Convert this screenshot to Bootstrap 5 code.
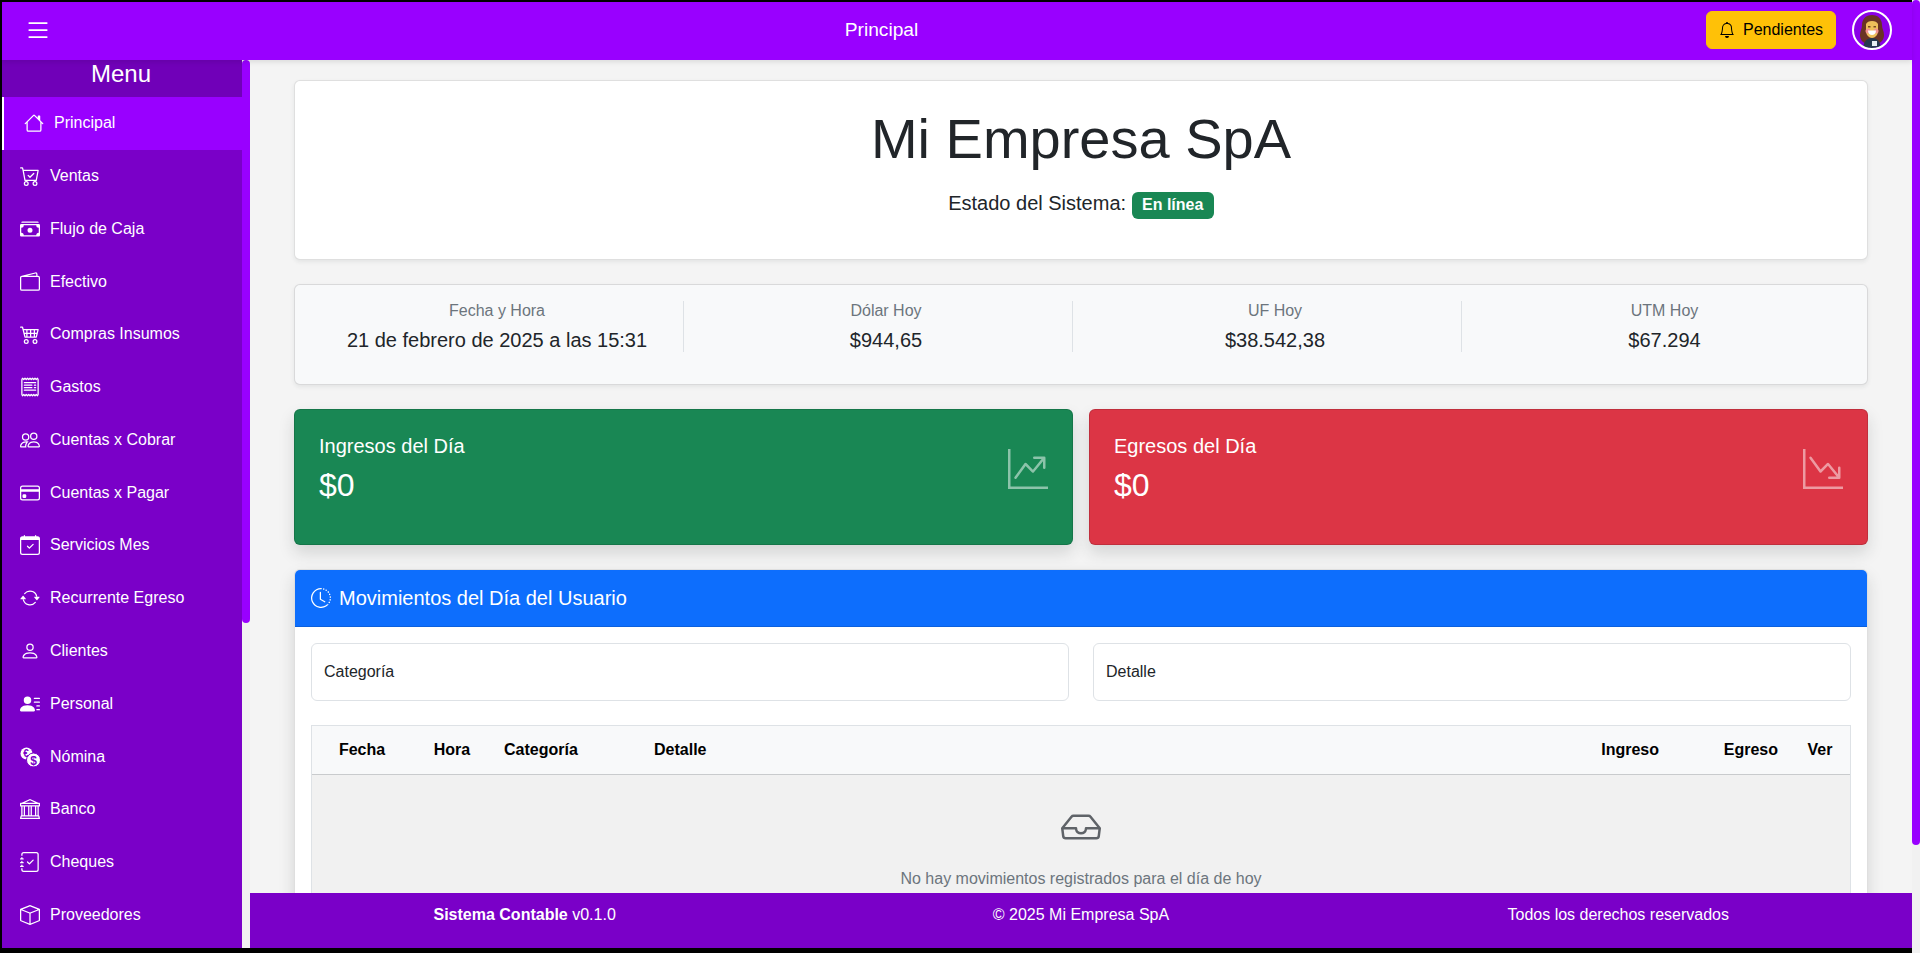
<!DOCTYPE html>
<html lang="es">
<head>
<meta charset="utf-8">
<title>Principal</title>
<link rel="stylesheet" href="https://cdn.jsdelivr.net/npm/bootstrap@5.3.0/dist/css/bootstrap.min.css">
<style>
html,body{height:100%;overflow:hidden}
body{background:#000;font-family:"Liberation Sans",Arial,sans-serif;color:#212529}
.app-shell{margin:2px 0 5px 2px;min-width:0}
.rail{width:8px;flex:none;background:#f1f1f1}
.rail-thumb{background:#9900ff;border-radius:4px}
.rail-page{height:845px}
.rail-side{height:563px}
.top-bar{height:58px;flex:none;background:#9900ff;color:#fff;padding:0 20px 2px 0;position:relative;z-index:2;box-shadow:0 2px 5px rgba(0,0,0,.1)}
.menu-toggle{padding:0 5px 0 22px;line-height:0;background:none;border:0}
.ico{display:inline-block;fill:currentColor;flex:none;vertical-align:-.125em}
.top-title{font-size:19.2px}
.pending-btn{font-size:16px;width:130px;height:38px;white-space:nowrap}
.pending-btn .ico{margin-right:8px}
.main-row{min-height:0}
.side-panel{width:240px;flex:none;background:#7a00c8;overflow:hidden}
.menu-head{background:#7000b8;color:#fff;font-size:24px;line-height:28.8px;padding:0 2px 8px 0;text-align:center;height:36.8px}
.menu-link{display:flex;align-items:center;color:#fff;text-decoration:none;font-size:16px;line-height:24px;padding:14.4px 0 14.4px 18px;white-space:nowrap}
.menu-link .ico{margin-right:10px}
.menu-link.is-current{background:#9900ff;border-left:2px solid #fff;padding-left:20px}
.content-pane{background:#f4f4f4;padding:20px 44px;min-height:0}
.stat-cell{height:51px}
.stat-title{color:#6c757d;line-height:20px;margin-bottom:7px}
.online-chip{font-size:.8em;background:#198754;border-radius:6px;vertical-align:baseline}
.lead-line{font-size:20px;font-weight:400;line-height:30px}
.hero-title{font-size:56px;font-weight:400;line-height:1.2}
.flow-ico{opacity:.5}
.filter-input{height:58px;font-size:16px}
.filter-input::placeholder{color:#212529;opacity:1}
.mov-table-wrap{border:1px solid #dee2e6;border-bottom:0}
.mov-table{table-layout:fixed;margin:0}
.mov-table th{background:#f8f9fa;color:#000;font-size:16px;padding:12px;border-bottom:1px solid #c9cbcd;white-space:nowrap}
.mov-table td.empty-cell{background:#f1f1f1;color:#6c757d;padding:32px 12px 16px;border:0}
.c-fecha{width:100px}.c-hora{width:80px}.c-cat{width:150px}.c-ing{width:119px}.c-eg{width:119px}.c-ver{width:60px}
.empty-ico{color:#5f6368;display:block;margin:0 auto 20px}
.bottom-bar{background:#7a00c8;color:#fff;height:55px;padding-top:10px;flex:none;font-size:16px;line-height:24px}
.foot-l{padding-left:183.5px}
.foot-r{padding-right:183px}
.card{--bs-card-border-color:rgba(0,0,0,.125)}
</style>
</head>
<body class="d-flex">
<div class="app-shell d-flex flex-column flex-grow-1">
  <header class="top-bar d-flex align-items-center">
    <button class="menu-toggle text-white" type="button" aria-label="Menu">
      <svg class="ico" width="28" height="28" viewBox="0 0 16 16"><path d="M2.5 12a.5.5 0 0 1 .5-.5h10a.5.5 0 0 1 0 1H3a.5.5 0 0 1-.5-.5zm0-4a.5.5 0 0 1 .5-.5h10a.5.5 0 0 1 0 1H3a.5.5 0 0 1-.5-.5zm0-4a.5.5 0 0 1 .5-.5h10a.5.5 0 0 1 0 1H3a.5.5 0 0 1-.5-.5z"/></svg>
    </button>
    <div class="flex-grow-1 text-center top-title">Principal</div>
    <button class="btn btn-warning pending-btn d-flex align-items-center me-3" type="button">
      <svg class="ico" width="16" height="16" viewBox="0 0 16 16"><path d="M8 16a2 2 0 0 0 2-2H6a2 2 0 0 0 2 2zM8 1.918l-.797.161A4.002 4.002 0 0 0 4 6c0 .628-.134 2.197-.459 3.742-.16.767-.376 1.566-.663 2.258h10.244c-.287-.692-.502-1.49-.663-2.258C12.134 8.197 12 6.628 12 6a4.002 4.002 0 0 0-3.203-3.92L8 1.917zM14.22 12c.223.447.481.801.78 1H1c.299-.199.557-.553.78-1C2.68 10.2 3 6.88 3 6c0-2.42 1.72-4.44 4.005-4.901a1 1 0 1 1 1.99 0A5.002 5.002 0 0 1 13 6c0 .88.32 4.2 1.22 6z"/></svg>Pendientes
    </button>
    <svg width="40" height="40" viewBox="0 0 40 40" role="img" aria-label="Usuario">
      <defs><clipPath id="avClip"><circle cx="20" cy="20" r="18"/></clipPath></defs>
      <g clip-path="url(#avClip)">
        <rect width="40" height="40" fill="#8a00e6"/>
        <path d="M20 5c-6 0-10 4-10 10 0 4-2 6-2 10 0 4 2 7 5 8h14c3-1 5-4 5-8 0-4-2-6-2-10 0-6-4-10-10-10z" fill="#6a3324"/>
        <path d="M11 40c0-7 3-12 9-12s9 5 9 12z" fill="#26384e"/>
        <rect x="20" y="31" width="5" height="5" fill="#e8edf2"/>
        <path d="M14 14c1-2 3-3 6-3s5 1 6 3v7c0 4-3 7-6 7s-6-3-6-7z" fill="#eec05a"/>
        <ellipse cx="16" cy="21" rx="2.500" ry="2.500" fill="#f3938f"/>
        <ellipse cx="24" cy="21" rx="2.500" ry="2.500" fill="#f3938f"/>
        <rect x="16" y="16" width="2.500" height="1.500" fill="#7a4a20"/>
        <rect x="21.500" y="16" width="2.500" height="1.500" fill="#7a4a20"/>
        <path d="M16 20.500h8c0 3-2 4.500-4 4.500s-4-1.500-4-4.500z" fill="#fff"/>
      </g>
      <circle cx="20" cy="20" r="19" fill="none" stroke="#fff" stroke-width="2"/>
    </svg>
  </header>

  <div class="main-row d-flex flex-grow-1 overflow-hidden">
    <aside class="side-panel">
      <div class="menu-head">Menu</div>
      <a class="menu-link is-current" href="#"><svg class="ico" width="20" height="20" viewBox="0 0 16 16"><path d="M8.707 1.5a1 1 0 0 0-1.414 0L.646 8.146a.5.5 0 0 0 .708.708L2 8.207V13.500A1.500 1.500 0 0 0 3.500 15h9a1.500 1.500 0 0 0 1.500-1.500V8.207l.646.647a.5.5 0 0 0 .708-.708L13 5.793V2.500a.5.5 0 0 0-.5-.5h-1a.5.5 0 0 0-.5.5v1.293L8.707 1.500ZM13 7.207V13.500a.5.5 0 0 1-.5.5h-9a.5.5 0 0 1-.5-.5V7.207l5-5 5 5Z"/></svg>Principal</a>
      <a class="menu-link" href="#"><svg class="ico" width="20" height="20" viewBox="0 0 16 16"><path d="M11.354 6.354a.5.5 0 0 0-.708-.708L8 8.293 6.854 7.146a.5.5 0 1 0-.708.708l1.500 1.500a.5.5 0 0 0 .708 0l3-3z"/><path d="M.5 1a.5.5 0 0 0 0 1h1.110l.401 1.607 1.498 7.985A.5.5 0 0 0 4 12h1a2 2 0 1 0 0 4 2 2 0 0 0 0-4h7a2 2 0 1 0 0 4 2 2 0 0 0 0-4h1a.5.5 0 0 0 .491-.408l1.500-8A.5.5 0 0 0 14.500 3H2.890l-.405-1.621A.5.5 0 0 0 2 1H.5zm3.915 10L3.102 4h10.796l-1.313 7h-8.170zM6 14a1 1 0 1 1-2 0 1 1 0 0 1 2 0zm7 0a1 1 0 1 1-2 0 1 1 0 0 1 2 0z"/></svg>Ventas</a>
      <a class="menu-link" href="#"><svg class="ico" width="20" height="20" viewBox="0 0 16 16"><path d="M1 3a1 1 0 0 1 1-1h12a1 1 0 0 1 1 1H1zm7 8a2 2 0 1 0 0-4 2 2 0 0 0 0 4z"/><path d="M0 5a1 1 0 0 1 1-1h14a1 1 0 0 1 1 1v8a1 1 0 0 1-1 1H1a1 1 0 0 1-1-1V5zm3 0a2 2 0 0 1-2 2v4a2 2 0 0 1 2 2h10a2 2 0 0 1 2-2V7a2 2 0 0 1-2-2H3z"/></svg>Flujo de Caja</a>
      <a class="menu-link" href="#"><svg class="ico" width="20" height="20" viewBox="0 0 16 16"><path d="M12.136.326A1.500 1.500 0 0 1 14 1.780V3h.5A1.500 1.500 0 0 1 16 4.500v9a1.500 1.500 0 0 1-1.500 1.500h-13A1.500 1.500 0 0 1 0 13.500v-9a1.500 1.500 0 0 1 1.432-1.499L12.136.326zM5.562 3H13V1.780a.5.5 0 0 0-.621-.484L5.562 3zM1.500 4a.5.5 0 0 0-.5.5v9a.5.5 0 0 0 .5.5h13a.5.5 0 0 0 .5-.5v-9a.5.5 0 0 0-.5-.5h-13z"/></svg>Efectivo</a>
      <a class="menu-link" href="#"><svg class="ico" width="20" height="20" viewBox="0 0 16 16"><path d="M0 2.500A.5.5 0 0 1 .5 2H2a.5.5 0 0 1 .485.379L2.890 4H14.500a.5.5 0 0 1 .485.621l-1.500 6A.5.5 0 0 1 13 11H4a.5.5 0 0 1-.485-.379L1.610 3H.5a.5.5 0 0 1-.5-.5zM3.140 5l.5 2H5V5H3.140zM6 5v2h2V5H6zm3 0v2h2V5H9zm3 0v2h1.360l.5-2H12zm1.110 3H12v2h.61l.5-2zM11 8H9v2h2V8zM8 8H6v2h2V8zM5 8H3.890l.5 2H5V8zm0 5a1 1 0 1 0 0 2 1 1 0 0 0 0-2zm-2 1a2 2 0 1 1 4 0 2 2 0 0 1-4 0zm9-1a1 1 0 1 0 0 2 1 1 0 0 0 0-2zm-2 1a2 2 0 1 1 4 0 2 2 0 0 1-4 0z"/></svg>Compras Insumos</a>
      <a class="menu-link" href="#"><svg class="ico" width="20" height="20" viewBox="0 0 16 16"><path d="M1.920.506a.5.5 0 0 1 .434.14L3 1.293l.646-.647a.5.5 0 0 1 .708 0L5 1.293l.646-.647a.5.5 0 0 1 .708 0L7 1.293l.646-.647a.5.5 0 0 1 .708 0L9 1.293l.646-.647a.5.5 0 0 1 .708 0l.646.647.646-.647a.5.5 0 0 1 .708 0l.646.647.646-.647a.5.5 0 0 1 .801.130l.5 1A.5.5 0 0 1 15 2v12a.5.5 0 0 1-.053.224l-.5 1a.5.5 0 0 1-.8.13L13 14.707l-.646.647a.5.5 0 0 1-.708 0L11 14.707l-.646.647a.5.5 0 0 1-.708 0L9 14.707l-.646.647a.5.5 0 0 1-.708 0L7 14.707l-.646.647a.5.5 0 0 1-.708 0L5 14.707l-.646.647a.5.5 0 0 1-.708 0L3 14.707l-.646.647a.5.5 0 0 1-.801-.13l-.5-1A.5.5 0 0 1 1 14V2a.5.5 0 0 1 .053-.224l.5-1a.5.5 0 0 1 .367-.27zm.217 1.338L2 2.118v11.764l.137.274.51-.51a.5.5 0 0 1 .707 0l.646.647.646-.646a.5.5 0 0 1 .708 0l.646.646.646-.646a.5.5 0 0 1 .708 0l.646.646.646-.646a.5.5 0 0 1 .708 0l.646.646.646-.646a.5.5 0 0 1 .708 0l.646.646.646-.646a.5.5 0 0 1 .708 0l.509.509.137-.274V2.118l-.137-.274-.51.51a.5.5 0 0 1-.707 0L12 1.707l-.646.647a.5.5 0 0 1-.708 0L10 1.707l-.646.647a.5.5 0 0 1-.708 0L8 1.707l-.646.647a.5.5 0 0 1-.708 0L6 1.707l-.646.647a.5.5 0 0 1-.708 0L4 1.707l-.646.647a.5.5 0 0 1-.708 0l-.509-.51z"/><path d="M3 4.500a.5.5 0 0 1 .5-.5h9a.5.5 0 0 1 0 1h-9a.5.5 0 0 1-.5-.5zm0 2a.5.5 0 0 1 .5-.5h6a.5.5 0 1 1 0 1h-6a.5.5 0 0 1-.5-.5zm0 2a.5.5 0 0 1 .5-.5h6a.5.5 0 1 1 0 1h-6a.5.5 0 0 1-.5-.5zm0 2a.5.5 0 0 1 .5-.5h9a.5.5 0 0 1 0 1h-9a.5.5 0 0 1-.5-.5zM11.500 6a.5.5 0 0 0 0 1h1a.5.5 0 0 0 0-1h-1zm0 2a.5.5 0 0 0 0 1h1a.5.5 0 0 0 0-1h-1z"/></svg>Gastos</a>
      <a class="menu-link" href="#"><svg class="ico" width="20" height="20" viewBox="0 0 16 16"><path d="M15 14s1 0 1-1-1-4-5-4-5 3-5 4 1 1 1 1h8Zm-7.978-1A.261.261 0 0 1 7 12.996c.001-.264.167-1.03.76-1.72C8.312 10.629 9.282 10 11 10c1.717 0 2.687.63 3.240 1.276.593.69.758 1.457.76 1.720l-.008.002a.274.274 0 0 1-.014.002H7.022ZM11 7a2 2 0 1 0 0-4 2 2 0 0 0 0 4Zm3-2a3 3 0 1 1-6 0 3 3 0 0 1 6 0ZM6.936 9.280a5.880 5.880 0 0 0-1.230-.247A7.350 7.350 0 0 0 5 9c-4 0-5 3-5 4 0 .667.333 1 1 1h4.216A2.238 2.238 0 0 1 5 13c0-1.010.377-2.042 1.090-2.904.243-.294.526-.569.846-.816ZM4.920 10A5.493 5.493 0 0 0 4 13H1c0-.26.164-1.030.76-1.724.545-.636 1.492-1.256 3.160-1.275ZM1.500 5.500a3 3 0 1 1 6 0 3 3 0 0 1-6 0Zm3-2a2 2 0 1 0 0 4 2 2 0 0 0 0-4Z"/></svg>Cuentas x Cobrar</a>
      <a class="menu-link" href="#"><svg class="ico" width="20" height="20" viewBox="0 0 16 16"><path d="M0 4a2 2 0 0 1 2-2h12a2 2 0 0 1 2 2v8a2 2 0 0 1-2 2H2a2 2 0 0 1-2-2V4zm2-1a1 1 0 0 0-1 1v1h14V4a1 1 0 0 0-1-1H2zm13 4H1v5a1 1 0 0 0 1 1h12a1 1 0 0 0 1-1V7z"/><path d="M2 10a1 1 0 0 1 1-1h1a1 1 0 0 1 1 1v1a1 1 0 0 1-1 1H3a1 1 0 0 1-1-1v-1z"/></svg>Cuentas x Pagar</a>
      <a class="menu-link" href="#"><svg class="ico" width="20" height="20" viewBox="0 0 16 16"><path d="M10.854 7.146a.5.5 0 0 1 0 .708l-3 3a.5.5 0 0 1-.708 0l-1.500-1.500a.5.5 0 1 1 .708-.708L7.500 9.793l2.646-2.647a.5.5 0 0 1 .708 0z"/><path d="M3.500 0a.5.5 0 0 1 .5.5V1h8V.5a.5.5 0 0 1 1 0V1h1a2 2 0 0 1 2 2v11a2 2 0 0 1-2 2H2a2 2 0 0 1-2-2V3a2 2 0 0 1 2-2h1V.5a.5.5 0 0 1 .5-.5zM1 4v10a1 1 0 0 0 1 1h12a1 1 0 0 0 1-1V4H1z"/></svg>Servicios Mes</a>
      <a class="menu-link" href="#"><svg class="ico" width="20" height="20" viewBox="0 0 16 16"><path d="M11.534 7h3.932a.25.25 0 0 1 .192.41l-1.966 2.360a.25.25 0 0 1-.384 0l-1.966-2.360a.25.25 0 0 1 .192-.41zm-11 2h3.932a.25.25 0 0 0 .192-.41L2.692 6.230a.25.25 0 0 0-.384 0L.342 8.590A.25.25 0 0 0 .534 9z"/><path d="M8 3c-1.552 0-2.940.707-3.857 1.818a.5.5 0 1 1-.771-.636A6.002 6.002 0 0 1 13.917 7H12.900A5.002 5.002 0 0 0 8 3zM3.100 9a5.002 5.002 0 0 0 8.757 2.182.5.5 0 1 1 .771.636A6.002 6.002 0 0 1 2.083 9H3.100z"/></svg>Recurrente Egreso</a>
      <a class="menu-link" href="#"><svg class="ico" width="20" height="20" viewBox="0 0 16 16"><path d="M8 8a3 3 0 1 0 0-6 3 3 0 0 0 0 6Zm2-3a2 2 0 1 1-4 0 2 2 0 0 1 4 0Zm4 8c0 1-1 1-1 1H3s-1 0-1-1 1-4 6-4 6 3 6 4Zm-1-.004c-.001-.246-.154-.986-.832-1.664C11.516 10.680 10.289 10 8 10c-2.290 0-3.516.68-4.168 1.332-.678.678-.83 1.418-.832 1.664h10Z"/></svg>Clientes</a>
      <a class="menu-link" href="#"><svg class="ico" width="20" height="20" viewBox="0 0 16 16"><path d="M6 8a3 3 0 1 0 0-6 3 3 0 0 0 0 6zm-5 6s-1 0-1-1 1-4 6-4 6 3 6 4-1 1-1 1H1zM11 3.500a.5.5 0 0 1 .5-.5h4a.5.5 0 0 1 0 1h-4a.5.5 0 0 1-.5-.5zm.5 2.500a.5.5 0 0 0 0 1h4a.5.5 0 0 0 0-1h-4zm2 3a.5.5 0 0 0 0 1h2a.5.5 0 0 0 0-1h-2zm0 3a.5.5 0 0 0 0 1h2a.5.5 0 0 0 0-1h-2z"/></svg>Personal</a>
      <a class="menu-link" href="#"><svg class="ico" width="20" height="20" viewBox="0 0 20 20"><circle cx="6.500" cy="6.500" r="6" fill="#fff"/><circle cx="13.500" cy="13" r="7" fill="#fff" stroke="#7a00c8" stroke-width="1"/><text x="6" y="10" font-size="10" font-weight="700" font-family="Liberation Sans" fill="#7a00c8" text-anchor="middle">€</text><text x="13.500" y="17.500" font-size="12" font-weight="700" font-family="Liberation Sans" fill="#7a00c8" text-anchor="middle">$</text></svg>Nómina</a>
      <a class="menu-link" href="#"><svg class="ico" width="20" height="20" viewBox="0 0 16 16"><path d="m8 0 6.610 3h.89a.5.5 0 0 1 .5.5v2a.5.5 0 0 1-.5.5H15v7a.5.5 0 0 1 .485.38l.5 2a.498.498 0 0 1-.485.62H.5a.498.498 0 0 1-.485-.62l.5-2A.5.5 0 0 1 1 13V6H.5a.5.5 0 0 1-.5-.5v-2A.5.5 0 0 1 .5 3h.89L8 0ZM3.777 3h8.447L8 1 3.777 3ZM2 6v7h1V6H2Zm2 0v7h2.500V6H4Zm3.500 0v7h1V6h-1Zm2 0v7H12V6H9.500ZM13 6v7h1V6h-1Zm2-1V4H1v1h14Zm-.39 9H1.390l-.25 1h13.720l-.25-1Z"/></svg>Banco</a>
      <a class="menu-link" href="#"><svg class="ico" width="20" height="20" viewBox="0 0 16 16"><path d="M10.854 6.146a.5.5 0 0 1 0 .708l-3 3a.5.5 0 0 1-.708 0l-1.500-1.500a.5.5 0 1 1 .708-.708L7.500 8.793l2.646-2.647a.5.5 0 0 1 .708 0z"/><path d="M3 0h10a2 2 0 0 1 2 2v12a2 2 0 0 1-2 2H3a2 2 0 0 1-2-2v-1h1v1a1 1 0 0 0 1 1h10a1 1 0 0 0 1-1V2a1 1 0 0 0-1-1H3a1 1 0 0 0-1 1v1H1V2a2 2 0 0 1 2-2z"/><path d="M1 5v-.5a.5.5 0 0 1 1 0V5h.5a.5.5 0 0 1 0 1h-2a.5.5 0 0 1 0-1H1zm0 3v-.5a.5.5 0 0 1 1 0V8h.5a.5.5 0 0 1 0 1h-2a.5.5 0 0 1 0-1H1zm0 3v-.5a.5.5 0 0 1 1 0v.5h.5a.5.5 0 0 1 0 1h-2a.5.5 0 0 1 0-1H1z"/></svg>Cheques</a>
      <a class="menu-link" href="#"><svg class="ico" width="20" height="20" viewBox="0 0 16 16"><path d="M8.186 1.113a.5.5 0 0 0-.372 0L1.846 3.500 8 5.961 14.154 3.500 8.186 1.113zM15 4.239l-6.500 2.600v7.922l6.500-2.600V4.240zM7.500 14.762V6.838L1 4.239v7.925l6.500 2.600zM7.443.184a1.500 1.500 0 0 1 1.114 0l7.129 2.852A.5.5 0 0 1 16 3.500v8.662a1 1 0 0 1-.629.928l-7.185 2.874a.5.5 0 0 1-.372 0L.63 13.090a1 1 0 0 1-.63-.928V3.500a.5.5 0 0 1 .314-.464L7.443.184z"/></svg>Proveedores</a>
    </aside>
    <div class="rail"><div class="rail-thumb rail-side"></div></div>

    <div class="d-flex flex-column flex-grow-1 overflow-hidden">
      <main class="content-pane flex-grow-1 overflow-hidden">
        <section class="card shadow-sm mb-4">
          <div class="card-body p-4 text-center">
            <h1 class="hero-title mb-3">Mi Empresa SpA</h1>
            <p class="lead-line mb-3">Estado del Sistema: <span class="badge online-chip">En línea</span></p>
          </div>
        </section>

        <section class="card bg-light shadow-sm mb-4">
          <div class="card-body p-3">
            <div class="row g-3 text-center mb-3">
              <div class="col-3"><div class="stat-cell border-end"><div class="stat-title">Fecha y Hora</div><h5 class="mb-0 fw-normal">21 de febrero de 2025 a las 15:31</h5></div></div>
              <div class="col-3"><div class="stat-cell border-end"><div class="stat-title">Dólar Hoy</div><h5 class="mb-0 fw-normal">$944,65</h5></div></div>
              <div class="col-3"><div class="stat-cell border-end"><div class="stat-title">UF Hoy</div><h5 class="mb-0 fw-normal">$38.542,38</h5></div></div>
              <div class="col-3"><div class="stat-cell"><div class="stat-title">UTM Hoy</div><h5 class="mb-0 fw-normal">$67.294</h5></div></div>
            </div>
          </div>
        </section>

        <div class="row g-3 mb-4">
          <div class="col-6">
            <div class="card text-white bg-success shadow">
              <div class="card-body p-4">
                <div class="d-flex justify-content-between align-items-center mb-3">
                  <div><h5 class="mb-2 fw-normal">Ingresos del Día</h5><h2 class="mb-0 fw-normal">$0</h2></div>
                  <svg class="ico flow-ico" width="40" height="40" viewBox="0 0 16 16"><path fill-rule="evenodd" d="M0 0h1v15h15v1H0V0Zm10 3.500a.5.5 0 0 1 .5-.5h4a.5.5 0 0 1 .5.5v4a.5.5 0 0 1-1 0V4.900l-3.613 4.417a.5.5 0 0 1-.74.037L7.060 6.767l-3.656 5.027a.5.5 0 0 1-.808-.588l4-5.500a.5.5 0 0 1 .758-.06l2.609 2.610L13.445 4H10.500a.5.5 0 0 1-.5-.5Z"/></svg>
                </div>
              </div>
            </div>
          </div>
          <div class="col-6">
            <div class="card text-white bg-danger shadow">
              <div class="card-body p-4">
                <div class="d-flex justify-content-between align-items-center mb-3">
                  <div><h5 class="mb-2 fw-normal">Egresos del Día</h5><h2 class="mb-0 fw-normal">$0</h2></div>
                  <svg class="ico flow-ico" width="40" height="40" viewBox="0 0 16 16"><path fill-rule="evenodd" d="M0 0h1v15h15v1H0V0Zm10 11.500a.5.5 0 0 0 .5.5h4a.5.5 0 0 0 .5-.5v-4a.5.5 0 0 0-1 0v2.600l-3.613-4.417a.5.5 0 0 0-.74-.037L7.060 8.233 3.404 3.206a.5.5 0 0 0-.808.588l4 5.500a.5.5 0 0 0 .758.06l2.609-2.610L13.445 11H10.500a.5.5 0 0 0-.5.5Z"/></svg>
                </div>
              </div>
            </div>
          </div>
        </div>

        <section class="card shadow">
          <div class="card-header bg-primary text-white py-3">
            <h5 class="mb-0 fw-normal d-flex align-items-center"><svg class="ico me-2" width="20" height="20" viewBox="0 0 16 16"><path d="M8.515 1.019A7 7 0 0 0 8 1V0a8 8 0 0 1 .589.022l-.074.997zm2.004.45a7.003 7.003 0 0 0-.985-.299l.219-.976c.383.086.76.2 1.126.342l-.36.933zm1.370.71a7.010 7.010 0 0 0-.439-.27l.493-.87a8.025 8.025 0 0 1 .979.654l-.615.789a6.996 6.996 0 0 0-.418-.302zm1.834 1.790a6.990 6.990 0 0 0-.653-.796l.724-.69c.27.285.52.59.747.91l-.818.576zm.744 1.352a7.080 7.080 0 0 0-.214-.468l.893-.45a7.976 7.976 0 0 1 .45 1.088l-.95.313a7.023 7.023 0 0 0-.179-.483zm.53 2.507a6.991 6.991 0 0 0-.1-1.025l.985-.17c.067.386.106.778.116 1.170l-1 .025zm-.131 1.538c.033-.17.06-.339.081-.51l.993.123a7.957 7.957 0 0 1-.23 1.155l-.964-.267c.046-.165.086-.332.12-.501zm-.952 2.379c.184-.29.346-.594.486-.908l.914.405c-.16.36-.345.706-.555 1.038l-.845-.535zm-.964 1.205c.122-.122.239-.248.35-.378l.758.653a8.073 8.073 0 0 1-.401.432l-.707-.707z"/><path d="M8 1a7 7 0 1 0 4.950 11.950l.707.707A8.001 8.001 0 1 1 8 0v1z"/><path d="M7.500 3a.5.5 0 0 1 .5.5v5.210l3.248 1.856a.5.5 0 0 1-.496.868l-3.500-2A.5.5 0 0 1 7 9V3.500a.5.5 0 0 1 .5-.5z"/></svg>Movimientos del Día del Usuario</h5>
          </div>
          <div class="card-body p-3">
            <div class="row g-4 mb-4">
              <div class="col-6"><input class="form-control filter-input" type="text" placeholder="Categoría" aria-label="Categoría"></div>
              <div class="col-6"><input class="form-control filter-input" type="text" placeholder="Detalle" aria-label="Detalle"></div>
            </div>
            <div class="mov-table-wrap">
              <table class="table mov-table">
                <colgroup><col class="c-fecha"><col class="c-hora"><col class="c-cat"><col><col class="c-ing"><col class="c-eg"><col class="c-ver"></colgroup>
                <thead>
                  <tr><th class="text-center">Fecha</th><th class="text-center">Hora</th><th>Categoría</th><th>Detalle</th><th class="text-end">Ingreso</th><th class="text-end">Egreso</th><th class="text-center">Ver</th></tr>
                </thead>
                <tbody>
                  <tr><td class="empty-cell text-center" colspan="7">
                    <svg class="ico empty-ico" width="40" height="40" viewBox="0 0 16 16"><path d="M4.980 4a.5.5 0 0 0-.39.188L1.540 8H6a.5.5 0 0 1 .5.5 1.500 1.500 0 1 0 3 0A.5.5 0 0 1 10 8h4.460l-3.050-3.812A.5.5 0 0 0 11.020 4H4.980zm9.954 5H10.450a2.500 2.500 0 0 1-4.900 0H1.066l.32 2.562a.5.5 0 0 0 .497.438h12.234a.5.5 0 0 0 .496-.438L14.933 9zM3.809 3.563A1.500 1.500 0 0 1 4.981 3h6.038a1.500 1.500 0 0 1 1.172.563l3.700 4.625a.5.5 0 0 1 .105.374l-.39 3.124A1.500 1.500 0 0 1 14.117 13H1.883a1.500 1.500 0 0 1-1.489-1.314l-.39-3.124a.5.5 0 0 1 .106-.374l3.700-4.625z"/></svg>
                    No hay movimientos registrados para el día de hoy
                  </td></tr>
                </tbody>
              </table>
            </div>
          </div>
        </section>
      </main>
      <footer class="bottom-bar row g-0 mx-0">
        <div class="col-4 text-start foot-l"><strong>Sistema Contable</strong> v0.1.0</div>
        <div class="col-4 text-center">© 2025 Mi Empresa SpA</div>
        <div class="col-4 text-end foot-r">Todos los derechos reservados</div>
      </footer>
    </div>
  </div>
</div>
<div class="rail"><div class="rail-thumb rail-page"></div></div>
<script src="https://cdn.jsdelivr.net/npm/bootstrap@5.3.0/dist/js/bootstrap.bundle.min.js"></script>
</body>
</html>
